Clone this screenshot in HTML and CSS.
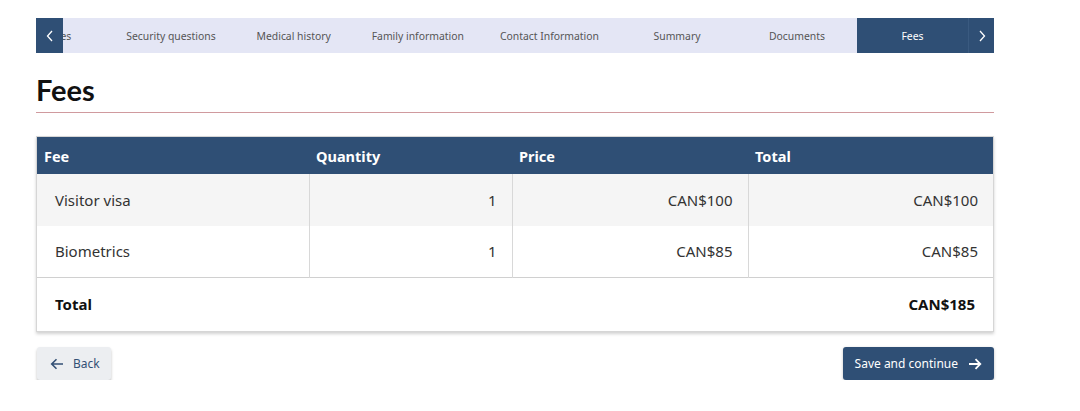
FILE: index.html
```html
<!DOCTYPE html>
<html lang="en">
<head>
<meta charset="utf-8">
<title>Fees</title>
<link rel="stylesheet" href="styles.css">
</head>
<body>
<main class="page">
  <nav class="tabs">
    <button class="tab-arrow" aria-label="Previous">
      <svg width="8" height="12" viewBox="0 0 8 12"><path d="M6 1 L1.5 6 L6 11" fill="none" stroke="#fff" stroke-width="1.3"/></svg>
    </button>
    <div class="tab-viewport">
      <div class="tab-row">
        <span class="tab">Addresses</span>
        <span class="tab">Security questions</span>
        <span class="tab">Medical history</span>
        <span class="tab">Family information</span>
        <span class="tab">Contact Information</span>
        <span class="tab">Summary</span>
        <span class="tab">Documents</span>
        <span class="tab active">Fees</span>
      </div>
    </div>
    <button class="tab-arrow right" aria-label="Next">
      <svg width="8" height="12" viewBox="0 0 8 12"><path d="M2 1 L6.5 6 L2 11" fill="none" stroke="#fff" stroke-width="1.3"/></svg>
    </button>
  </nav>

  <h1 class="title">Fees</h1>

  <div class="table-card">
    <table class="fees">
      <thead>
        <tr><th class="c1">Fee</th><th class="c2">Quantity</th><th class="c3">Price</th><th class="c4">Total</th></tr>
      </thead>
      <tbody>
        <tr class="alt"><td>Visitor visa</td><td class="num">1</td><td class="num">CAN$100</td><td class="num">CAN$100</td></tr>
        <tr><td>Biometrics</td><td class="num">1</td><td class="num">CAN$85</td><td class="num">CAN$85</td></tr>
        <tr class="total"><td>Total</td><td></td><td></td><td class="num">CAN$185</td></tr>
      </tbody>
    </table>
  </div>

  <div class="actions">
    <button class="btn back">
      <svg width="14" height="12" viewBox="0 0 14 12"><path d="M13 6 H2 M6.5 1.2 L1.7 6 L6.5 10.8" fill="none" stroke="#335075" stroke-width="1.6"/></svg>
      <span>Back</span>
    </button>
    <button class="btn primary">
      <span>Save and continue</span>
      <svg width="14" height="12" viewBox="0 0 14 12"><path d="M1 6 H12 M7.5 1.2 L12.3 6 L7.5 10.8" fill="none" stroke="#fff" stroke-width="1.8"/></svg>
    </button>
  </div>
</main>
</body>
</html>
```

FILE: styles.css
```css
* { box-sizing: border-box; }
html, body { margin: 0; background: #fff; }
body { font-family: "Noto Sans", "Open Sans", sans-serif; color: #333; }

.page {
  width: 958px;
  margin: 18px 0 0 36px;
}

/* tabs */
.tabs {
  display: flex;
  height: 35px;
  background: #e4e6f5;
}
.tab-arrow {
  flex: 0 0 27px;
  border: 0;
  padding: 0;
  background: #2f4f75;
  display: flex;
  align-items: center;
  justify-content: center;
}
.tab-arrow.right { flex-basis: 26px; border-left: 1px solid #3a5a80; }
.tab-viewport {
  flex: 1;
  overflow: hidden;
  display: flex;
  justify-content: flex-end;
}
.tab-row {
  display: flex;
  flex: 0 0 auto;
}
.tab {
  min-width: 120px;
  padding: 0 18px;
  display: flex;
  align-items: center;
  justify-content: center;
  font-size: 10.4px;
  color: #555;
  white-space: nowrap;
}
.tab:first-child { padding-right: 22px; }
.tab.active {
  min-width: 111px;
  background: #2f4f75;
  color: #fff;
}

/* heading */
.title {
  font-family: Lato, "Noto Sans", sans-serif;
  font-weight: 700;
  font-size: 29px;
  color: #111;
  margin: 19px 0 0;
  line-height: 36px;
  padding-bottom: 4px;
  border-bottom: 1px solid #d09a9e;
}

/* table */
.table-card {
  margin-top: 23px;
  border: 1px solid #d6d6d6;
  box-shadow: 0 2px 3px rgba(0,0,0,0.18);
}
.fees {
  width: 100%;
  border-collapse: collapse;
  table-layout: fixed;
}
.fees th {
  background: #2f4f75;
  color: #fff;
  font-weight: 700;
  font-size: 14.5px;
  text-align: left;
  height: 37px;
  padding: 0 7px;
}
.fees th.c1 { width: 272px; }
.fees th.c2 { width: 203px; }
.fees th.c3 { width: 236px; }
.fees td {
  height: 51.5px;
  font-size: 15px;
  padding: 0 18px;
  color: #333;
  border-left: 1px solid #d8d8d8;
}
.fees td:first-child { border-left: 0; }
.fees td.num { text-align: right; padding-right: 15px; }
.fees tr.alt td { background: #f5f5f5; }
.fees tr.total td {
  border-top: 1px solid #d0d0d0;
  border-left: 0;
  font-weight: 700;
  color: #111;
  height: 54px;
}
.fees tr.total td.num { padding-right: 18px; }

/* actions */
.actions {
  display: flex;
  justify-content: space-between;
  margin-top: 15px;
}
.btn {
  display: flex;
  align-items: center;
  gap: 10px;
  height: 33px;
  border: 0;
  border-radius: 3px;
  font-family: "Noto Sans", "Open Sans", sans-serif;
  font-size: 12px;
  padding: 0 12px;
}
.btn.back {
  margin-left: 1px;
  background: #eceef1;
  color: #335075;
  box-shadow: 0 2px 3px rgba(0,0,0,0.25);
  padding: 0 11px 0 13px;
  gap: 9px;
}
.btn.primary {
  background: #2f4f75;
  color: #fff;
  box-shadow: 0 1px 3px rgba(0,0,0,0.25);
}
```
